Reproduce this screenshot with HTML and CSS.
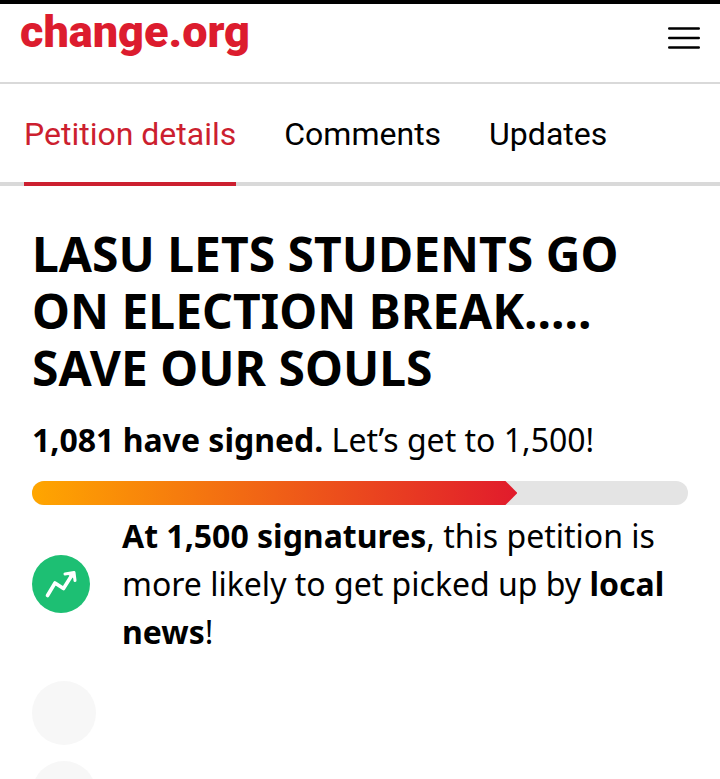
FILE: index.html
```html
<!DOCTYPE html>
<html lang="en">
<head>
  <meta charset="UTF-8">
  <meta name="viewport" content="width=device-width, initial-scale=1.0">
  <title>LASU LETS STUDENTS GO ON ELECTION BREAK</title>
  <link rel="stylesheet" href="styles.css">
</head>
<body>
  <!-- Header -->
  <header class="header">
    <a class="logo" href="#">change.org</a>
    <button class="menu-button" type="button" aria-label="Menu">
      <svg width="32" height="24" viewBox="0 0 32 24" stroke="#000" stroke-width="2.4" stroke-linecap="round">
        <path d="M1.2 2.5H30.8M1.2 12H30.8M1.2 21.5H30.8"/>
      </svg>
    </button>
  </header>

  <!-- Tabs -->
  <nav class="tabs">
    <a class="tab active" href="#details">Petition details</a>
    <a class="tab" href="#comments">Comments</a>
    <a class="tab" href="#updates">Updates</a>
  </nav>

  <!-- Petition -->
  <main class="petition" id="details">
    <h1>LASU LETS STUDENTS GO ON ELECTION BREAK..... SAVE OUR SOULS</h1>
    <p class="signed"><strong>1,081 have signed.</strong> Let’s get to 1,500!</p>
    <div class="progress">
      <div class="progress-fill" style="width: 74%"></div>
    </div>
    <div class="milestone">
      <svg class="milestone-icon" width="58" height="58" viewBox="0 0 58 58" fill="none">
        <circle cx="29" cy="29" r="29" fill="#1dbf73"/>
        <g stroke="#fff" stroke-linejoin="round" stroke-linecap="round">
          <path d="M15.500 40.500L23 28L31.500 33.500L40 20" stroke-width="3.6"/>
          <path d="M33 19L42 17.500L43 25.500" stroke-width="3"/>
          <path d="M36 19L42 17.500L42.500 23Z" fill="#fff" stroke-width="1"/>
        </g>
      </svg>
      <p><strong>At 1,500 signatures</strong>, this petition is more likely to get picked up by <strong>local news</strong>!</p>
    </div>
    <!-- Supporter placeholders -->
    <ul class="supporters">
      <li class="avatar"></li>
      <li class="avatar"></li>
    </ul>
  </main>
</body>
</html>
```
FILE: styles.css
```css
* {
  box-sizing: border-box;
}
body {
  font-family: "Noto Sans", sans-serif;
  margin: 0;
  background-color: #fff;
  color: #000;
  display: flex;
  flex-direction: column;
  height: 100vh;
  overflow: hidden;
  border-top: 4px solid #000;
}
.header {
  display: flex;
  justify-content: space-between;
  align-items: flex-start;
  padding: 0 20px 22px;
  border-bottom: 2px solid #d9d9d9;
}
.logo {
  font-family: Roboto, sans-serif;
  font-size: 45px;
  font-weight: 900;
  line-height: 56px;
  color: #dc1c2e;
  text-decoration: none;
}
.menu-button {
  display: flex;
  margin-top: 22px;
  padding: 0;
  border: none;
  background: none;
  cursor: pointer;
}
.tabs {
  display: flex;
  gap: 48px;
  padding: 0 24px;
  font-family: Roboto, sans-serif;
  font-size: 32px;
  line-height: 48px;
  box-shadow: inset 0 -4px #d9d9d9;
}
.tab {
  padding: 26px 0 24px;
  border-bottom: 4px solid transparent;
  color: #000;
  text-decoration: none;
  white-space: nowrap;
}
.tab.active {
  color: #cc1f2f;
  border-bottom-color: #cc1f2f;
}
.petition {
  flex: 1;
  min-height: 0;
  overflow: hidden;
  padding: 39px 32px 0;
  font-size: 32px;
  line-height: 48px;
}
h1 {
  margin: 0 0 20px;
  font-size: 48px;
  line-height: 57px;
}
p {
  margin: 0;
}
.progress {
  height: 24px;
  margin: 17px 0 7px;
  border-radius: 12px;
  background-color: #e4e4e4;
  overflow: hidden;
}
.progress-fill {
  height: 100%;
  background: linear-gradient(to right, #ffa600, #e11b2c);
  clip-path: polygon(0 0, calc(100% - 12px) 0, 100% 50%, calc(100% - 12px) 100%, 0 100%);
}
.milestone {
  display: flex;
  align-items: center;
  gap: 32px;
}
.milestone-icon {
  flex: none;
}
.supporters {
  display: flex;
  flex-direction: column;
  gap: 16px;
  margin: 25px 0 0;
  padding: 0;
  list-style: none;
}
.avatar {
  width: 64px;
  height: 64px;
  border-radius: 50%;
  background-color: #f7f7f7;
}
```
